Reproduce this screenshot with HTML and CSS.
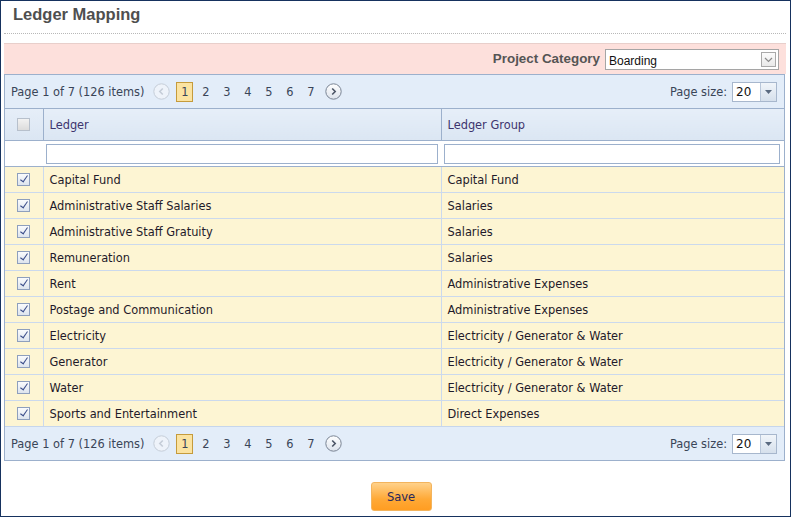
FILE: index.html
```html
<!DOCTYPE html>
<html>
<head>
<meta charset="utf-8">
<link rel="stylesheet" href="styles.css">
</head>
<body>
<div class="window">
  <h1 class="title">Ledger Mapping</h1>
  <div class="sep"></div>
  <div class="catbar">
    <span class="catlabel">Project Category</span>
    <div class="catselect"><span>Boarding</span><span class="catbtn"><svg width="9" height="6" viewBox="0 0 9 6"><path d="M1 1 L4.5 4.5 L8 1" fill="none" stroke="#8a8a8a" stroke-width="1.2"/></svg></span></div>
  </div>
  <div class="grid">
    <div class="pager">
      <span class="pinfo">Page 1 of 7 (126 items)</span>
      <span class="circ dis"><svg width="17" height="17" viewBox="0 0 17 17"><circle cx="8.5" cy="8.5" r="7.7" fill="#eef3fa" stroke="#c5cdd8"/><path d="M9.8 5.5 L6.8 8.5 L9.8 11.5" fill="none" stroke="#c5cdd8" stroke-width="1.6"/></svg></span>
      <span class="pn cur">1</span><span class="pn">2</span><span class="pn">3</span><span class="pn">4</span><span class="pn">5</span><span class="pn">6</span><span class="pn">7</span>
      <span class="circ nxt"><svg width="17" height="17" viewBox="0 0 17 17"><defs><linearGradient id="g1" x1="0" y1="0" x2="0" y2="1"><stop offset="0" stop-color="#ffffff"/><stop offset="1" stop-color="#dde3ec"/></linearGradient></defs><circle cx="8.5" cy="8.5" r="7.7" fill="url(#g1)" stroke="#7a8494"/><path d="M7.2 5.5 L10.2 8.5 L7.2 11.5" fill="none" stroke="#4c5566" stroke-width="1.6"/></svg></span>
      <span class="spacer"></span>
      <span class="psl">Page size:</span>
      <span class="psize"><span class="psv">20</span><span class="psb"><svg width="7" height="4" viewBox="0 0 7 4"><path d="M0 0 H7 L3.5 4 Z" fill="#5a6a80"/></svg></span></span>
    </div>
    <table class="tbl">
      <colgroup><col class="c0"><col class="c1"><col class="c2"></colgroup>
      <thead>
        <tr class="hdr"><th class="cb"><span class="chk off"></span></th><th>Ledger</th><th>Ledger Group</th></tr>
        <tr class="flt"><td class="cb"></td><td><div class="fin"></div></td><td><div class="fin"></div></td></tr>
      </thead>
      <tbody>
        <tr><td class="cb"><span class="chk"></span></td><td>Capital Fund</td><td>Capital Fund</td></tr>
        <tr><td class="cb"><span class="chk"></span></td><td>Administrative Staff Salaries</td><td>Salaries</td></tr>
        <tr><td class="cb"><span class="chk"></span></td><td>Administrative Staff Gratuity</td><td>Salaries</td></tr>
        <tr><td class="cb"><span class="chk"></span></td><td>Remuneration</td><td>Salaries</td></tr>
        <tr><td class="cb"><span class="chk"></span></td><td>Rent</td><td>Administrative Expenses</td></tr>
        <tr><td class="cb"><span class="chk"></span></td><td>Postage and Communication</td><td>Administrative Expenses</td></tr>
        <tr><td class="cb"><span class="chk"></span></td><td>Electricity</td><td>Electricity / Generator &amp; Water</td></tr>
        <tr><td class="cb"><span class="chk"></span></td><td>Generator</td><td>Electricity / Generator &amp; Water</td></tr>
        <tr><td class="cb"><span class="chk"></span></td><td>Water</td><td>Electricity / Generator &amp; Water</td></tr>
        <tr><td class="cb"><span class="chk"></span></td><td>Sports and Entertainment</td><td>Direct Expenses</td></tr>
      </tbody>
    </table>
    <div class="pager bottom">
      <span class="pinfo">Page 1 of 7 (126 items)</span>
      <span class="circ dis"><svg width="17" height="17" viewBox="0 0 17 17"><circle cx="8.5" cy="8.5" r="7.7" fill="#eef3fa" stroke="#c5cdd8"/><path d="M9.8 5.5 L6.8 8.5 L9.8 11.5" fill="none" stroke="#c5cdd8" stroke-width="1.6"/></svg></span>
      <span class="pn cur">1</span><span class="pn">2</span><span class="pn">3</span><span class="pn">4</span><span class="pn">5</span><span class="pn">6</span><span class="pn">7</span>
      <span class="circ nxt"><svg width="17" height="17" viewBox="0 0 17 17"><defs><linearGradient id="g2" x1="0" y1="0" x2="0" y2="1"><stop offset="0" stop-color="#ffffff"/><stop offset="1" stop-color="#dde3ec"/></linearGradient></defs><circle cx="8.5" cy="8.5" r="7.7" fill="url(#g2)" stroke="#7a8494"/><path d="M7.2 5.5 L10.2 8.5 L7.2 11.5" fill="none" stroke="#4c5566" stroke-width="1.6"/></svg></span>
      <span class="spacer"></span>
      <span class="psl">Page size:</span>
      <span class="psize"><span class="psv">20</span><span class="psb"><svg width="7" height="4" viewBox="0 0 7 4"><path d="M0 0 H7 L3.5 4 Z" fill="#5a6a80"/></svg></span></span>
    </div>
  </div>
  <div class="actions"><button class="save">Save</button></div>
</div>
</body>
</html>
```

FILE: styles.css
```css
html, body { margin: 0; padding: 0; background: #fff; }
.window {
  width: 791px; height: 517px; box-sizing: border-box;
  border: 1px solid #16325e;
  font-family: "DejaVu Sans", Verdana, sans-serif;
  font-size: 11.4px;
  padding: 0 4px 0 3px;
  display: flex; flex-direction: column;
}
.title {
  margin: 0; padding: 3px 0 0 9px; height: 28px; box-sizing: border-box;
  font-family: "Liberation Sans", Arial, sans-serif; font-weight: bold;
  font-size: 16.5px; color: #4f4f4f; line-height: 20px;
}
.sep { border-top: 1px dotted #b8b8b8; margin: 4px 0 0 0; height: 9px; }
.catbar {
  height: 31px; box-sizing: border-box;
  background: #fde0dc; border-top: 1px solid #e8cfcb;
  display: flex; align-items: center; justify-content: flex-end;
  padding-right: 7px; gap: 5px;
}
.catlabel {
  font-family: "Liberation Sans", Arial, sans-serif; font-weight: bold;
  font-size: 13.4px; color: #555; margin-top: -2px;
}
.catselect {
  width: 174px; height: 21px; box-sizing: border-box;
  border: 1px solid #a5a5a5; background: #fff;
  display: flex; align-items: center; justify-content: space-between;
  font-family: "Liberation Sans", Arial, sans-serif; font-size: 12px; color: #111;
  padding-left: 3px; margin-top: 1px;
}
.catselect span:first-child { margin-top: 2px; }
.catbtn {
  width: 15px; height: 15px; box-sizing: border-box; margin-right: 2px;
  border: 1px solid #a9a9a9; background: linear-gradient(#fbfbfb, #e9e9e9);
  display: flex; align-items: center; justify-content: center;
}
.grid { border: 1px solid #9cb0cc; margin-right: 1px; }
.pager {
  height: 34px; box-sizing: border-box; background: #e3edf9;
  display: flex; align-items: center; padding: 0 7px 0 6px;
  color: #3a4558; border-bottom: 1px solid #9cb0cc;
}
.pager.bottom { border-bottom: none; border-top: 1px solid #c6d6ec; height: 34px; }
.pinfo { margin-right: 9px; }
.circ { display: inline-flex; width: 17px; height: 17px; }
.pn { width: 21px; text-align: center; line-height: 20px; }
.pn.cur {
  width: 15px; height: 18px; box-sizing: content-box; margin: 0 2px 0 6px;
  background: #fbe3a1; border: 1px solid #c59b3c; line-height: 18px;
}
.circ.nxt { margin-left: 4px; }
.spacer { flex: 1; }
.psl { margin-right: 5px; }
.psize {
  display: flex; width: 45px; height: 20px; box-sizing: border-box;
  border: 1px solid #a7b7cd; background: #fff;
}
.psv { flex: 1; padding-left: 3px; line-height: 18px; font-size: 12px; color: #111; }
.psb {
  width: 15px; border-left: 1px solid #b9c7da;
  background: linear-gradient(#f1f5fa, #d6e0ec);
  display: flex; align-items: center; justify-content: center;
}
.tbl { width: 100%; border-collapse: collapse; table-layout: fixed; }
.c0 { width: 38px; }
.c1 { width: 398px; }
.tbl th {
  height: 31px; text-align: left; font-weight: normal; color: #3e356e;
  background: linear-gradient(#e6eef8, #dbe6f3);
  border-left: 1px solid #9cb0cc; border-bottom: 1px solid #9cb0cc;
  padding: 0 0 0 6px;
}
.tbl th.cb, .tbl td.cb { border-left: none; padding: 0; text-align: center; }
.flt td { height: 25px; background: #fff; padding: 0 3px; border-bottom: 1px solid #9cb0cc; }
.fin {
  height: 20px; box-sizing: border-box; border: 1px solid #9cb0cc; background: #fff;
}
.flt td:nth-child(3) .fin { margin-right: 1px; }
.tbl tbody td {
  height: 25px; background: #fdf5d3; color: #1f1a2a;
  border-left: 1px solid #cbd9ed; border-bottom: 1px solid #cbd9ed;
  padding: 0 0 0 6px; white-space: nowrap;
}
.tbl tbody tr:last-child td { border-bottom: none; }
.chk {
  display: inline-block; width: 13px; height: 13px; box-sizing: border-box;
  border: 1px solid #8e9fbd; background: linear-gradient(#fafbfd, #dde4ee);
  vertical-align: middle; position: relative; top: -1px;
}
.chk::after {
  content: ""; position: absolute; left: 4px; top: 0px; width: 3px; height: 7px;
  border: solid #3b4d8a; border-width: 0 1.6px 1.6px 0; transform: rotate(35deg);
}
.chk.off { border-color: #b7c0cc; background: linear-gradient(#f2f2f2, #dcdcdc); }
.chk.off::after { display: none; }
.actions { display: flex; justify-content: center; padding-top: 21px; padding-left: 12px; }
.save {
  width: 61px; height: 29px; border: 1px solid #f3b45d; border-radius: 3px;
  background: linear-gradient(#ffd18a, #ffa936 60%, #ff9d22);
  font-family: "DejaVu Sans", Verdana, sans-serif; font-size: 11.5px; color: #27285e;
  padding: 0;
}
```
